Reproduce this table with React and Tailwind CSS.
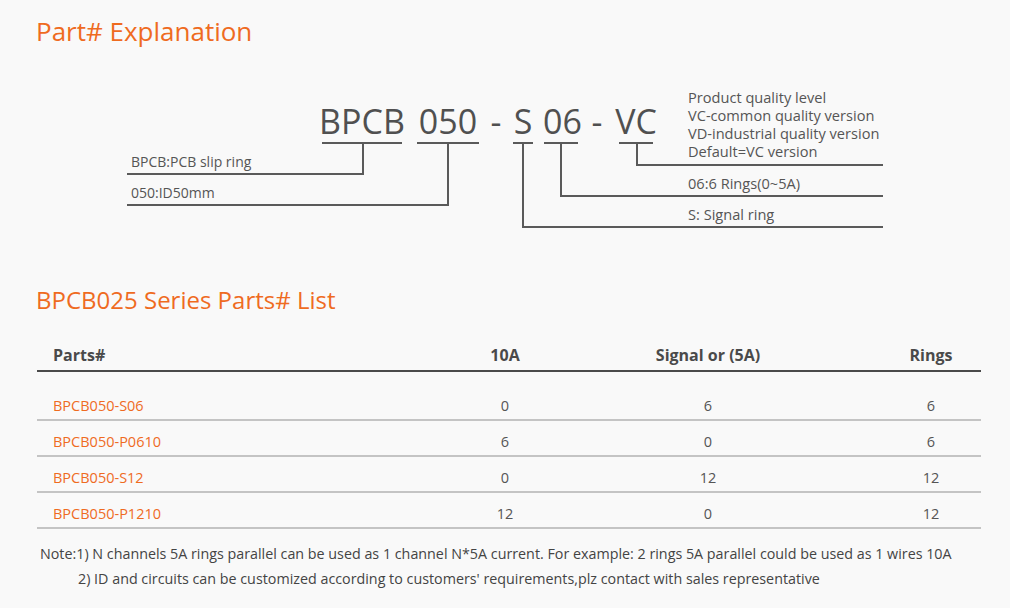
const ORANGE = 'text-[#ef6b1f]';

const PARTS = [
  { part: 'BPCB050-S06', a10: '0', signal: '6', rings: '6' },
  { part: 'BPCB050-P0610', a10: '6', signal: '0', rings: '6' },
  { part: 'BPCB050-S12', a10: '0', signal: '12', rings: '12' },
  { part: 'BPCB050-P1210', a10: '12', signal: '0', rings: '12' },
];

// connector lines of the part number diagram (page coords, offset by the diagram top)
function DiagramLines() {
  return (
    <svg className="absolute inset-0" width="1010" height="160" viewBox="0 85 1010 160" fill="none" stroke="#5a5a5a" strokeWidth="2">
      {/* underlines */}
      <path d="M322 143H402M417 143H479M513 143H533M544 143H578M619 143H653" />
      {/* BPCB */}
      <path d="M363 143V174H127" />
      {/* 050 */}
      <path d="M448 143V205H127" />
      {/* S */}
      <path d="M523 143V227H883" />
      {/* 06 */}
      <path d="M561 143V196H883" />
      {/* VC */}
      <path d="M637 143V165H883" />
    </svg>
  );
}

function Diagram() {
  return (
    <div className="relative h-[160px] text-[#555]">
      <DiagramLines />
      <div className="absolute left-[317px] top-[19px] flex items-baseline text-[34px] leading-[34px] text-[#505050]">
        <span className="w-[90px] text-center">BPCB</span>
        <span className="w-[82px] text-center">050</span>
        <span className="w-[14px] text-center">-</span>
        <span className="w-[40px] text-center">S</span>
        <span className="w-[36px] text-center">06</span>
        <span className="w-[36px] text-center">-</span>
        <span className="w-[42px] text-center">VC</span>
      </div>

      <div className="absolute left-[131px] top-[68px] text-[14px] leading-[18px]">BPCB:PCB slip ring</div>
      <div className="absolute left-[131px] top-[99px] text-[14px] leading-[18px]">050:ID50mm</div>

      <div className="absolute left-[688px] top-[3px] text-[14.6px] leading-[18px]">
        <p>Product quality level</p>
        <p>VC-common quality version</p>
        <p>VD-industrial quality version</p>
        <p>Default=VC version</p>
      </div>
      <div className="absolute left-[688px] top-[89px] text-[14.6px] leading-[18px]">06:6 Rings(0~5A)</div>
      <div className="absolute left-[688px] top-[120px] text-[14.6px] leading-[18px]">S: Signal ring</div>
    </div>
  );
}

export default function App() {
  return (
    <div className="h-[608px] w-[1010px] overflow-hidden bg-[#f9f9f9] font-['Open_Sans',sans-serif]">
      <h1 className={`pl-[36px] pt-[13px] text-[26px] leading-[36px] ${ORANGE}`}>Part# Explanation</h1>

      <div className="mt-[36px]">
        <Diagram />
      </div>

      <h2 className={`mt-[39px] pl-[36px] text-[24px] leading-[32px] ${ORANGE}`}>BPCB025 Series Parts# List</h2>

      <div className="mx-[37px] mt-[28px] w-[944px]">
        <div className="grid grid-cols-[438px_60px_346px_100px] border-b-2 border-[#4a4a4a] pb-[4px] text-[16px] font-bold leading-[22px] text-[#4a4a4a]">
          <div className="pl-[16px]">Parts#</div>
          <div className="text-center">10A</div>
          <div className="text-center">Signal or (5A)</div>
          <div className="text-center">Rings</div>
        </div>
        <div className="pt-[13px]">
          {PARTS.map((row) => (
            <div key={row.part} className="grid h-[36px] grid-cols-[438px_60px_346px_100px] items-end border-b-2 border-[#c4c4c4] pb-[3px] text-[14.5px] leading-[20px] text-[#555]">
              <div className={`pl-[16px] ${ORANGE}`}>{row.part}</div>
              <div className="text-center">{row.a10}</div>
              <div className="text-center">{row.signal}</div>
              <div className="text-center">{row.rings}</div>
            </div>
          ))}
        </div>
      </div>

      <div className="mt-[12px] pl-[40px] text-[14.3px] leading-[25px] text-[#444]">
        <p>Note:1) N channels 5A rings parallel can be used as 1 channel N*5A current. For example: 2 rings 5A parallel could be used as 1 wires 10A</p>
        <p className="pl-[38px]">2) ID and circuits can be customized according to customers' requirements,plz contact with sales representative</p>
      </div>
    </div>
  );
}
